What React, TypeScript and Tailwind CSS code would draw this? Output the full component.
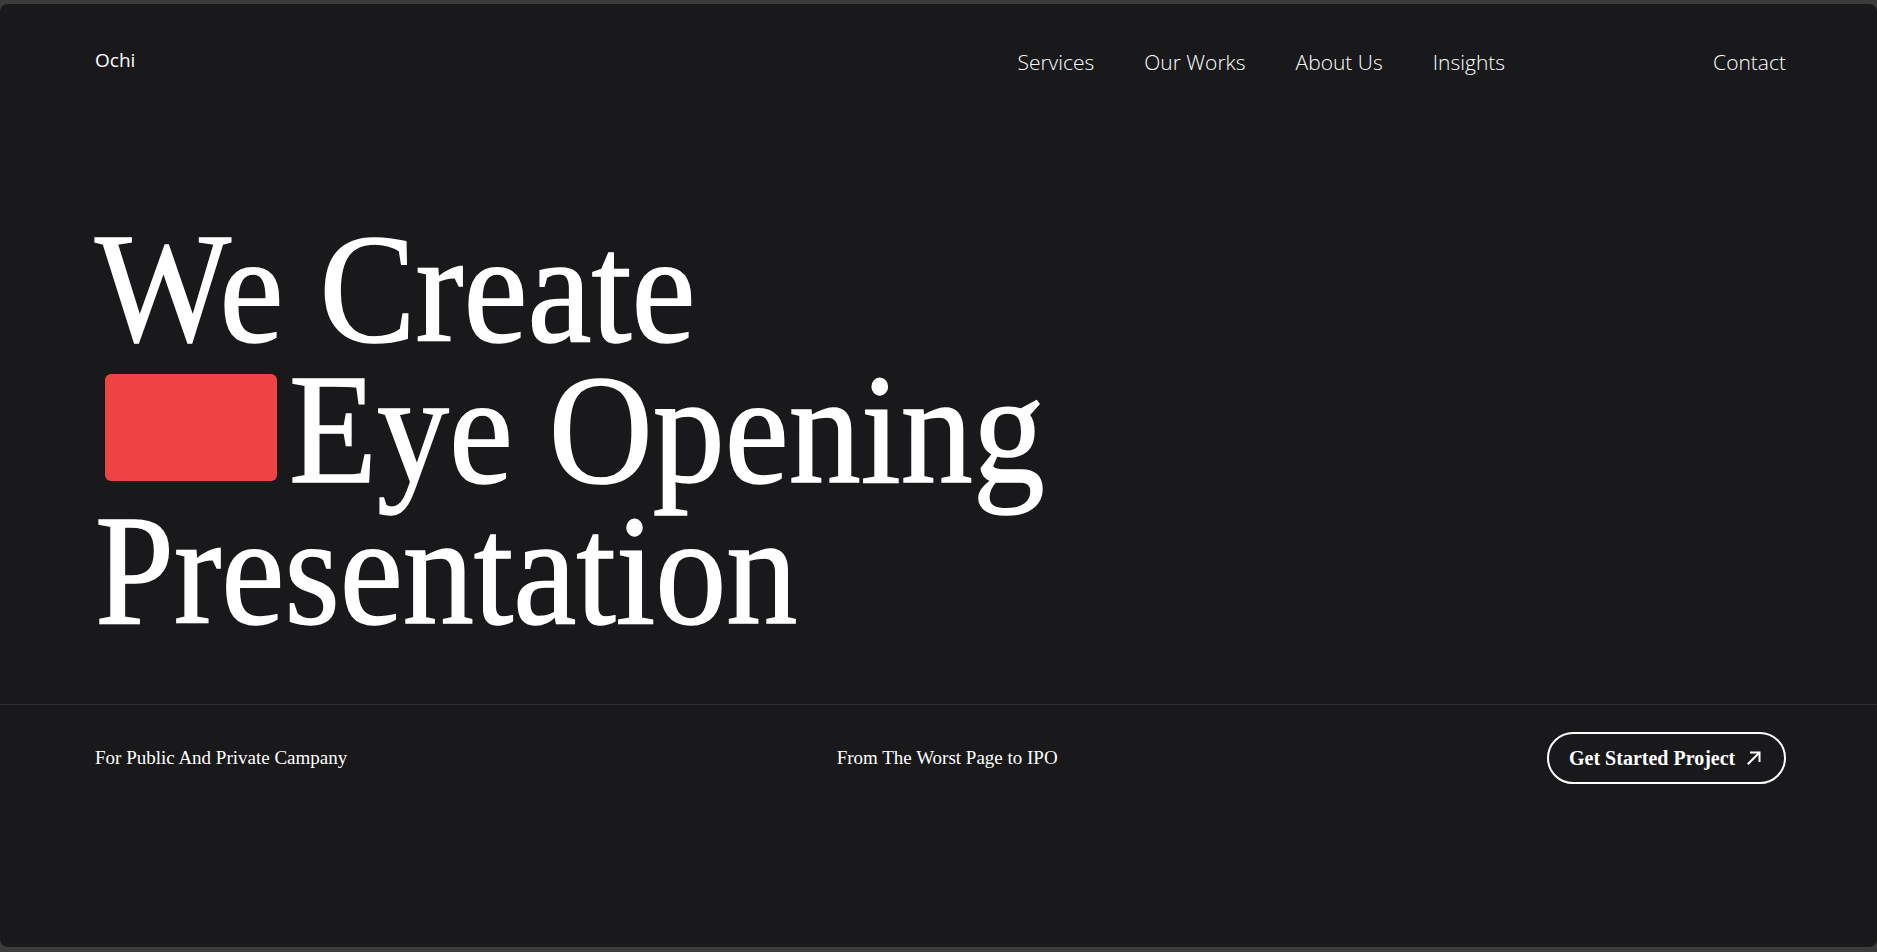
import React from "react";

const serif = { fontFamily: '"Liberation Serif", "Times New Roman", serif' };

function ArrowUpRight() {
  return (
    <svg width="16" height="16" viewBox="0 0 16 16" fill="none" stroke="white" strokeWidth="2" strokeLinecap="square">
      <path d="M2.5 13.5 L13 3" />
      <path d="M5 2.5 H13.5 V11" />
    </svg>
  );
}

export default function App() {
  const navLinks = ["Services", "Our Works", "About Us", "Insights"];
  return (
    <div className="w-full h-[952px] bg-[#3b3b3b] pt-[4px] pb-[5px] overflow-hidden">
      <div className="h-[943px] w-full bg-[#19191b] rounded-[8px] text-white flex flex-col">
        <header
          className="h-[114px] pl-[95px] pr-[91px] pt-[43px] flex items-start text-[21px] leading-[30px]"
          style={{ fontFamily: '"Open Sans", "Noto Sans", sans-serif' }}
        >
          <div className="font-normal text-[19px] -mt-[2px]">Ochi</div>
          <nav className="ml-auto flex gap-[50px] font-light">
            {navLinks.map((l) => (
              <span key={l}>{l}</span>
            ))}
          </nav>
          <span className="ml-[208px] font-light">Contact</span>
        </header>

        <section
          className="pl-[95px] pt-[100px] text-[157px] leading-[141px] [-webkit-text-stroke:1.5px_white]"
          style={serif}
        >
          <div className="h-[141px] whitespace-nowrap">
            <span className="inline-block origin-left scale-x-[0.918]">We Create</span>
          </div>
          <div className="h-[141px] flex items-start whitespace-nowrap">
            <div className="mt-[15px] ml-[10px] w-[172px] h-[107px] rounded-[6px] bg-[#ef4444] shrink-0" />
            <span className="ml-[12px] inline-block origin-left scale-x-[0.917]">Eye Opening</span>
          </div>
          <div className="h-[141px] whitespace-nowrap">
            <span className="inline-block origin-left scale-x-[0.905]">Presentation</span>
          </div>
        </section>

        <div className="mt-[63px] border-t border-[#303033]" />

        <div className="pl-[95px] pr-[91px] pt-[27px] flex justify-between items-center text-[19px]" style={serif}>
          <span>For Public And Private Campany</span>
          <span>From The Worst Page to IPO</span>
          <button className="h-[52px] w-[239px] rounded-full border-2 border-white flex items-center pl-[20px] pr-[22px] justify-between font-bold text-[20px]">
            <span>Get Started Project</span>
            <ArrowUpRight />
          </button>
        </div>
      </div>
    </div>
  );
}
